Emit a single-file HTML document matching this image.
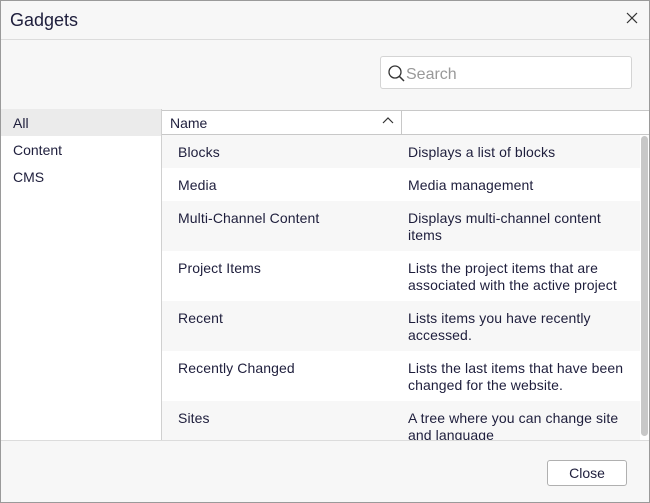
<!DOCTYPE html>
<html><head><style>
*{box-sizing:border-box;margin:0;padding:0}
body{width:650px;height:503px;font-family:"Liberation Sans",sans-serif;color:#1e1e3c;background:#f7f7f7;position:relative;overflow:hidden;font-size:14px}
.frame{position:absolute;left:0;top:0;width:650px;height:503px;border:1px solid #9a9a9a;}
.a{position:absolute}
.row{position:absolute;left:162px;width:478px}
.row span{position:absolute;top:9px;line-height:17px;letter-spacing:0.1px}
.n{left:16px}.d{left:246px;width:229px}
</style></head><body>
<div class="a" style="left:0;top:39px;width:650px;height:1px;background:#dcdcdc"></div>
<div class="a" style="left:10px;top:10px;font-size:18px">Gadgets</div>
<svg class="a" style="left:626px;top:12px" width="12" height="12"><path d="M1 1L11 11M11 1L1 11" stroke="#333" stroke-width="1.2"/></svg>
<div class="a" style="left:380px;top:56px;width:252px;height:33px;background:#fff;border:1px solid #d4d4d4;border-radius:3px"></div>
<svg class="a" style="left:386px;top:64px" width="20" height="20"><circle cx="9" cy="8" r="6" fill="none" stroke="#333" stroke-width="1.3"/><path d="M13 12L18 17" stroke="#333" stroke-width="1.5"/></svg>
<div class="a" style="left:406px;top:66px;font-size:16px;color:#999">Search</div>
<div class="a" style="left:0;top:109px;width:161px;height:331px;background:#fff"></div>
<div class="a" style="left:0;top:109px;width:161px;height:27px;background:#ebebeb"></div>
<div class="a" style="left:13px;top:115px">All</div>
<div class="a" style="left:13px;top:142px">Content</div>
<div class="a" style="left:13px;top:169px">CMS</div>
<div class="a" style="left:161px;top:109px;width:1px;height:331px;background:#d0d0d0"></div>
<div class="a" style="left:162px;top:110px;width:488px;height:25px;background:#fff;border-bottom:1px solid #c8c8c8;border-top:1px solid #c8c8c8"></div>
<div class="a" style="left:401px;top:110px;width:1px;height:24px;background:#c8c8c8"></div>
<div class="a" style="left:170px;top:115px">Name</div>
<svg class="a" style="left:382px;top:117px" width="12" height="8"><path d="M1 6L6 1L11 6" fill="none" stroke="#333" stroke-width="1.2"/></svg>
<div class="row" style="top:135px;height:33px;background:#f7f7f7"><span class="n">Blocks</span><span class="d">Displays a list of blocks</span></div>
<div class="row" style="top:168px;height:33px;background:#fff"><span class="n">Media</span><span class="d">Media management</span></div>
<div class="row" style="top:201px;height:50px;background:#f7f7f7"><span class="n">Multi-Channel Content</span><span class="d">Displays multi-channel content<br>items</span></div>
<div class="row" style="top:251px;height:50px;background:#fff"><span class="n">Project Items</span><span class="d">Lists the project items that are associated with the active project</span></div>
<div class="row" style="top:301px;height:50px;background:#f7f7f7"><span class="n">Recent</span><span class="d">Lists items you have recently accessed.</span></div>
<div class="row" style="top:351px;height:50px;background:#fff"><span class="n">Recently Changed</span><span class="d">Lists the last items that have been changed for the website.</span></div>
<div class="row" style="top:401px;height:39px;background:#f7f7f7;overflow:hidden"><span class="n">Sites</span><span class="d">A tree where you can change site and language</span></div>
<div class="a" style="left:640px;top:135px;width:10px;height:305px;background:#fff"></div>
<div class="a" style="left:641px;top:136px;width:7px;height:300px;background:#c8c8c8;border-radius:4px"></div>
<div class="a" style="left:0;top:440px;width:650px;height:1px;background:#dcdcdc"></div>
<div class="a" style="left:547px;top:460px;width:80px;height:26px;background:#fff;border:1px solid #b0b0b0;border-radius:3px;text-align:center;line-height:24px">Close</div>
<div class="frame"></div>
</body></html>
